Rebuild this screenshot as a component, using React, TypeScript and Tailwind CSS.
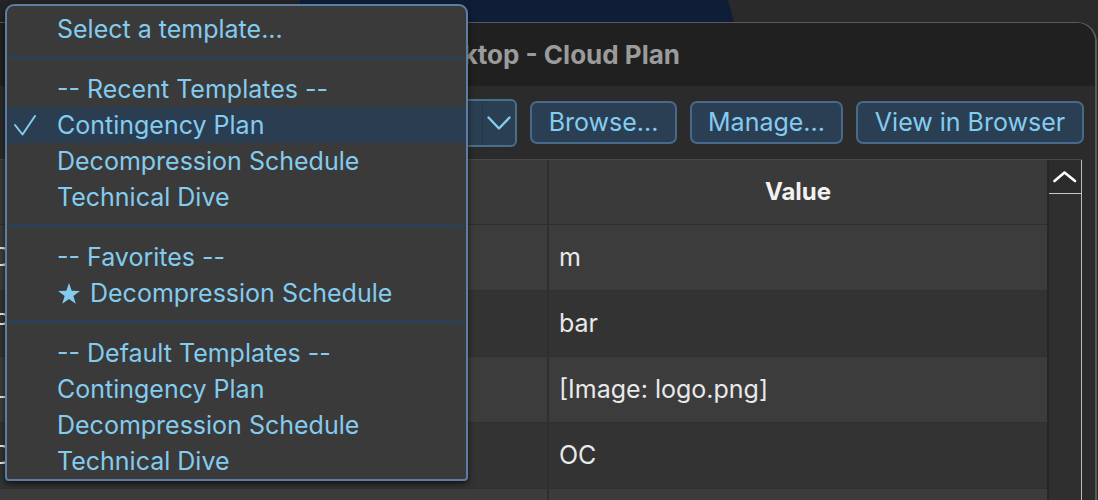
import React from "react";

function CheckIcon() {
  return (
    <svg width="24" height="21" viewBox="0 0 24 21" className="block ml-[6px]">
      <path d="M2 10 L9.5 19.5 L22 1" fill="none" stroke="#84ccef" strokeWidth="2" strokeLinecap="round" strokeLinejoin="round" />
    </svg>
  );
}

function StarIcon() {
  return (
    <svg width="24" height="23" viewBox="0 0 24 23" className="block shrink-0">
      <polygon
        points="12,1 14.7,8.78 22.94,8.95 16.37,13.92 18.76,21.8 12,17.1 5.24,21.8 7.63,13.92 1.06,8.95 9.3,8.78"
        fill="#84ccef"
      />
    </svg>
  );
}

function ChevronDown() {
  return (
    <svg width="24" height="14" viewBox="0 0 24 14" className="block">
      <path d="M1.5 1.5 L12 12.5 L22.5 1.5" fill="none" stroke="#84ccef" strokeWidth="2.4" strokeLinecap="round" strokeLinejoin="round" />
    </svg>
  );
}

function ChevronUp() {
  return (
    <svg width="24" height="12" viewBox="0 0 24 12" className="block">
      <path d="M1.5 10 L11.5 1.5 L22 10" fill="none" stroke="#ffffff" strokeWidth="2.6" strokeLinecap="round" strokeLinejoin="round" />
    </svg>
  );
}

function Item({ text, checked, highlighted }: { text: string; checked?: boolean; highlighted?: boolean }) {
  return (
    <div className={`h-[36px] shrink-0 flex items-center ${highlighted ? "bg-[#2b3e51]" : ""}`}>
      <div className="w-[50px] shrink-0 flex items-center">{checked ? <CheckIcon /> : null}</div>
      <span className="text-[25px] leading-none text-[#84ccef] whitespace-nowrap">{text}</span>
    </div>
  );
}

function Separator() {
  return (
    <div className="h-[24px] shrink-0 pt-[9px] px-[3px]">
      <div className="h-[3px] w-full bg-[#2b4156]" />
    </div>
  );
}

function Button({ label, w }: { label: string; w: string }) {
  return (
    <div
      className={`${w} h-[43px] shrink-0 rounded-[7px] border-2 border-[#47698a] bg-[#2a3f53] text-[#84ccef] text-[25px] leading-none flex items-center justify-center whitespace-nowrap`}
    >
      {label}
    </div>
  );
}

const rows = [
  { name: "Depth unit", value: "m" },
  { name: "Pressure unit", value: "bar" },
  { name: "Logo", value: "[Image: logo.png]" },
  { name: "Dive mode", value: "OC" },
  { name: "", value: "" },
];

export default function App() {
  return (
    <div className="relative w-[1098px] h-[500px] overflow-hidden bg-[#2a2a2a] font-['Inter',sans-serif]">
      {/* desktop wallpaper strip */}
      <div className="h-[22px] flex">
        <div className="w-[300px] bg-[#242424]" />
        <div className="w-[434px] bg-[#0f1e36] [clip-path:polygon(0_0,calc(100%-6px)_0,100%_100%,0_100%)]" />
        <div className="flex-1" />
      </div>

      {/* application window */}
      <div className="-ml-[140px] w-[1237px] h-[478px] rounded-tr-[20px] border-t border-r-2 border-[#5a5a5a] bg-[#2b2b2b] flex flex-col overflow-hidden">
        {/* title bar */}
        <div className="h-[63px] shrink-0 bg-[#202020] flex items-center">
          <div className="w-[820px] shrink-0 text-right text-[26px] font-bold text-[#9b9b9b] whitespace-nowrap">
            Dive Planner Desktop - Cloud Plan
          </div>
        </div>

        {/* toolbar */}
        <div className="h-[73px] shrink-0 flex items-center justify-end pr-[11px] gap-[13px]">
          <div className="flex items-center gap-[5px]">
            <span className="text-[25px] text-[#dcdcdc] whitespace-nowrap">Template:</span>
            <div className="w-[512px] h-[48px] rounded-[6px] border-2 border-[#4b6d8e] bg-[#2b3f52] flex">
              <div className="flex-1 flex items-center pl-[12px] text-[25px] text-[#84ccef]">Contingency Plan</div>
              <div className="w-[33px] border-l border-[#22354a] flex items-center justify-center">
                <ChevronDown />
              </div>
            </div>
          </div>
          <Button label="Browse..." w="w-[147px]" />
          <Button label="Manage..." w="w-[153px]" />
          <Button label="View in Browser" w="w-[228px]" />
        </div>

        {/* table */}
        <div className="flex-1 flex justify-end pr-[13px] min-h-0">
          <div className="w-[1102px] h-full border-t border-[#474747] flex">
            <div className="w-[1067px] flex flex-col">
              <div className="h-[65px] shrink-0 flex bg-[#3a3a3a] border-b border-[#2e2e2e]">
                <div className="w-[567px] flex items-center justify-center text-[24px] font-bold text-[#f2f2f2]">Field</div>
                <div className="w-[500px] border-l-2 border-[#2e2e2e] flex items-center justify-center text-[24px] font-bold text-[#f2f2f2]">
                  Value
                </div>
              </div>
              {rows.map((r, i) => (
                <div
                  key={i}
                  className={`h-[66px] shrink-0 flex border-b border-[#303030] ${i % 2 === 0 ? "bg-[#3c3c3c]" : "bg-[#333333]"}`}
                >
                  <div className="w-[567px] pl-[14px] flex items-center text-[25px] text-[#e6e6e6] whitespace-nowrap">{r.name}</div>
                  <div className="w-[500px] border-l-2 border-[#2f2f2f] pl-[10px] flex items-center text-[25px] text-[#e9e9e9] whitespace-nowrap">
                    {r.value}
                  </div>
                </div>
              ))}
            </div>
            <div className="w-[2px] bg-[#262626]" />
            <div className="w-[33px] flex flex-col bg-[#2f2f2f] border-r border-[#bdbdbd]">
              <div className="h-[34px] shrink-0 bg-[#2c2c2c] border-b border-[#c8c8c8] flex items-center justify-center">
                <ChevronUp />
              </div>
            </div>
          </div>
        </div>
      </div>

      {/* dropdown popup */}
      <div className="absolute left-[5px] top-[4px] w-[463px] rounded-t-[9px] rounded-b-[4px] border-2 border-[#5b7ea2] bg-[#3a3a3a] shadow-[0_3px_6px_rgba(0,0,0,0.6)] pt-[5px] flex flex-col overflow-hidden">
        <Item text="Select a template..." />
        <Separator />
        <Item text="-- Recent Templates --" />
        <Item text="Contingency Plan" checked highlighted />
        <Item text="Decompression Schedule" />
        <Item text="Technical Dive" />
        <Separator />
        <Item text="-- Favorites --" />
        <div className="h-[36px] shrink-0 flex items-center pl-[50px] gap-[9px]">
          <StarIcon />
          <span className="text-[25px] leading-none text-[#84ccef] whitespace-nowrap">Decompression Schedule</span>
        </div>
        <Separator />
        <Item text="-- Default Templates --" />
        <Item text="Contingency Plan" />
        <Item text="Decompression Schedule" />
        <Item text="Technical Dive" />
      </div>
    </div>
  );
}
